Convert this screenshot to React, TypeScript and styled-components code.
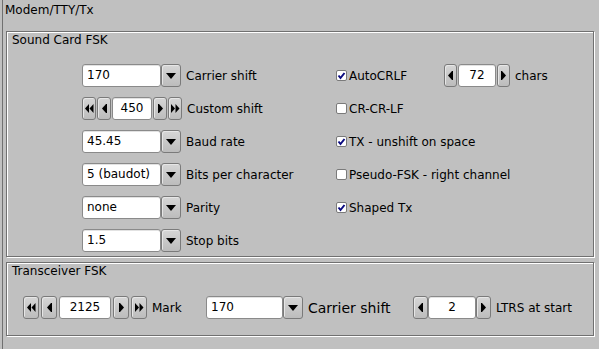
import React from 'react';
import styled, { createGlobalStyle } from 'styled-components';

const GlobalStyle = createGlobalStyle`
  html, body {
    margin: 0;
    padding: 0;
    background: #c0c0c0;
  }
  body {
    font-family: 'DejaVu Sans', Verdana, sans-serif;
    font-size: 12px;
    color: #000;
  }
`;

type LeftItem =
  | { kind: 'choice'; value: string; label: string }
  | { kind: 'counter'; value: string; label: string };

type RightItem = { checked: boolean; label: string; spin?: { value: string; label: string } } | null;

const leftItems: LeftItem[] = [
  { kind: 'choice', value: '170', label: 'Carrier shift' },
  { kind: 'counter', value: '450', label: 'Custom shift' },
  { kind: 'choice', value: '45.45', label: 'Baud rate' },
  { kind: 'choice', value: '5 (baudot)', label: 'Bits per character' },
  { kind: 'choice', value: 'none', label: 'Parity' },
  { kind: 'choice', value: '1.5', label: 'Stop bits' },
];

const rightItems: RightItem[] = [
  { checked: true, label: 'AutoCRLF', spin: { value: '72', label: 'chars' } },
  { checked: false, label: 'CR-CR-LF' },
  { checked: true, label: 'TX - unshift on space' },
  { checked: false, label: 'Pseudo-FSK - right channel' },
  { checked: true, label: 'Shaped Tx' },
  null,
];

const DownArrow = () => (
  <svg width="10" height="6" viewBox="0 0 10 6">
    <polygon points="0,0 10,0 5,6" fill="#000" />
  </svg>
);

const Arrow = ({ dir, double }: { dir: 'left' | 'right'; double?: boolean }) => {
  const one = (x: number) =>
    dir === 'left'
      ? `${x},4.5 ${x + 4},0 ${x + 4},9`
      : `${x + 4},4.5 ${x},0 ${x},9`;
  return (
    <svg width={double ? 9 : 5} height="9" viewBox={`0 0 ${double ? 9 : 5} 9`}>
      {double ? (
        <>
          <polygon points={one(0)} fill="#000" />
          <polygon points={one(4.5)} fill="#000" />
        </>
      ) : (
        <>
          <polygon points={one(dir === 'left' ? 0 : 1)} fill="#000" />
          <rect x={dir === 'left' ? 4 : 0} y="0" width="1" height="9" fill="#000" />
        </>
      )}
    </svg>
  );
};

const Check = ({ checked }: { checked: boolean }) => (
  <Box>
    {checked && (
      <svg width="9" height="9" viewBox="0 0 9 9">
        <path d="M1.5 4.5 L3.5 7 L7.5 2" stroke="#0a0a80" strokeWidth="2" fill="none" />
      </svg>
    )}
  </Box>
);

const Choice = ({ value, width }: { value: string; width: number }) => (
  <ChoiceWrap>
    <TextBox style={{ width }}>{value}</TextBox>
    <Btn $w={20}>
      <DownArrow />
    </Btn>
  </ChoiceWrap>
);

type CounterProps = {
  value: string;
  btn: number;
  input: number;
  gap: number;
  double?: boolean;
};

const Counter = ({ value, btn, input, gap, double }: CounterProps) => (
  <CounterWrap $gap={gap}>
    {double && (
      <Btn $w={btn}>
        <Arrow dir="left" double />
      </Btn>
    )}
    <Btn $w={btn}>
      <Arrow dir="left" />
    </Btn>
    <ValueBox style={{ width: input }}>{value}</ValueBox>
    <Btn $w={btn}>
      <Arrow dir="right" />
    </Btn>
    {double && (
      <Btn $w={btn}>
        <Arrow dir="right" double />
      </Btn>
    )}
  </CounterWrap>
);

const App = () => {
  return (
    <Page>
      <GlobalStyle />
      <Frame>
        <Title>Modem/TTY/Tx</Title>
        <Group $h={226}>
          <Legend>Sound Card FSK</Legend>
          <SoundGrid>
            {leftItems.map((item, i) => {
              const right = rightItems[i];
              return (
                <React.Fragment key={i}>
                  <Field>
                    {item.kind === 'choice' ? (
                      <Choice value={item.value} width={79} />
                    ) : (
                      <Counter value={item.value} btn={14} input={40} gap={1} double />
                    )}
                    <Label>{item.label}</Label>
                  </Field>
                  <Field>
                    {right && (
                      <>
                        <CheckItem $w={right.spin ? 108 : undefined}>
                          <Check checked={right.checked} />
                          <CheckText>{right.label}</CheckText>
                        </CheckItem>
                        {right.spin && (
                          <>
                            <Counter value={right.spin.value} btn={13} input={38} gap={1} />
                            <Label>{right.spin.label}</Label>
                          </>
                        )}
                      </>
                    )}
                  </Field>
                </React.Fragment>
              );
            })}
          </SoundGrid>
        </Group>
        <Group $h={74} $gap={5}>
          <Legend>Transceiver FSK</Legend>
          <XcvrRow>
            <Field>
              <Counter value="2125" btn={16} input={52} gap={2} double />
              <Label>Mark</Label>
            </Field>
            <Field>
              <Choice value="170" width={77} />
              <Label $big>Carrier shift</Label>
            </Field>
            <Field>
              <Counter value="2" btn={15} input={48} gap={0} />
              <Label>LTRS at start</Label>
            </Field>
          </XcvrRow>
        </Group>
      </Frame>
    </Page>
  );
};

export default App;

const Page = styled.div`
  width: 599px;
  height: 349px;
  padding-left: 2px;
  box-sizing: border-box;
  overflow: hidden;
`;

const Frame = styled.div`
  height: 100%;
  border-left: 1px solid #707070;
`;

const Title = styled.div`
  padding: 3px 0 0 2px;
  line-height: 14px;
  height: 14px;
`;

const Group = styled.div<{ $h: number; $gap?: number }>`
  margin: ${({ $gap }) => ($gap ?? 14)}px 0 0 3px;
  width: 588px;
  height: ${({ $h }) => $h}px;
  box-sizing: border-box;
  border: 1px solid #707070;
  box-shadow: inset 1px 1px 0 #fff, 1px 1px 0 #fff;
`;

const Legend = styled.div`
  padding: 1px 0 0 5px;
  line-height: 14px;
  height: 14px;
`;

const SoundGrid = styled.div`
  margin-top: 17px;
  padding-left: 75px;
  display: grid;
  grid-template-columns: 254px auto;
  grid-auto-rows: 23px;
  row-gap: 10px;
`;

const XcvrRow = styled.div`
  margin-top: 18px;
  padding-left: 16px;
  display: grid;
  grid-template-columns: 183px 207px auto;
  height: 23px;
`;

const Field = styled.div`
  display: flex;
  align-items: center;
  height: 23px;
`;

const Label = styled.span<{ $big?: boolean }>`
  margin-left: 5px;
  font-size: ${({ $big }) => ($big ? 14 : 12)}px;
  white-space: nowrap;
`;

const ChoiceWrap = styled.div`
  display: flex;
  height: 23px;
`;

const TextBox = styled.div`
  box-sizing: border-box;
  height: 23px;
  padding-left: 4px;
  line-height: 21px;
  background: #fff;
  border: 1px solid #8a8a8a;
  border-radius: 3px;
  box-shadow: inset 0 1px 0 #e2e2e2;
  white-space: nowrap;
  overflow: hidden;
`;

const ValueBox = styled(TextBox)`
  padding-left: 0;
  text-align: center;
`;

const Btn = styled.div<{ $w: number }>`
  box-sizing: border-box;
  width: ${({ $w }) => $w}px;
  height: 23px;
  display: flex;
  align-items: center;
  justify-content: center;
  border: 1px solid #7a7a7a;
  border-radius: 3px;
  background: linear-gradient(to bottom, #d6d6d6, #bcbcbc);
  box-shadow: inset 1px 1px 0 #e6e6e6;
`;

const CounterWrap = styled.div<{ $gap: number }>`
  display: flex;
  gap: ${({ $gap }) => $gap}px;
  height: 23px;
`;

const CheckItem = styled.div<{ $w?: number }>`
  display: flex;
  align-items: center;
  width: ${({ $w }) => ($w ? `${$w}px` : 'auto')};
`;

const Box = styled.div`
  box-sizing: border-box;
  width: 11px;
  height: 11px;
  display: flex;
  align-items: center;
  justify-content: center;
  background: #fff;
  border: 1px solid #7a7a7a;
  border-radius: 2px;
`;

const CheckText = styled.span`
  margin-left: 2px;
  white-space: nowrap;
`;
